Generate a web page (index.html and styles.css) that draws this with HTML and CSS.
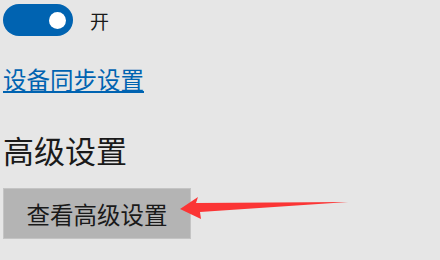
FILE: index.html
```html
<!DOCTYPE html>
<html lang="zh-CN">
<head>
    <meta charset="UTF-8">
    <title>同步设置</title>
    <link rel="stylesheet" href="styles.css">
</head>
<body>
    <div class="page">
        <div class="toggle-row">
            <div class="toggle"><div class="knob"></div></div>
            <span class="toggle-label">开</span>
        </div>

        <a class="link" href="#">设备同步设置</a>

        <h2 class="title">高级设置</h2>

        <button class="btn">查看高级设置</button>

        <svg class="arrow" width="440" height="260" viewBox="0 0 440 260">
            <polygon points="180,209 198,197 196,203 348,202 200,212 201,219" fill="#fb3535"/>
        </svg>
    </div>
</body>
</html>
```

FILE: styles.css
```css
body {
    margin: 0;
    padding: 0;
    background: #e6e6e6;
    font-family: "Microsoft YaHei", "Noto Sans CJK SC", sans-serif;
}
.page {
    position: relative;
    width: 440px;
    height: 260px;
    padding: 4px 0 0 3px;
    box-sizing: border-box;
    display: flex;
    flex-direction: column;
    align-items: flex-start;
}
.toggle-row {
    display: flex;
    align-items: center;
    height: 32px;
}
.toggle {
    width: 70px;
    height: 32px;
    border-radius: 16px;
    background: #0063b1;
    display: flex;
    align-items: center;
    justify-content: flex-end;
    padding-right: 7px;
    box-sizing: border-box;
}
.knob {
    width: 17px;
    height: 17px;
    border-radius: 50%;
    background: white;
}
.toggle-label {
    margin-left: 17px;
    font-size: 19px;
    color: #1a1a1a;
}
.link {
    margin-top: 27px;
    font-size: 23.5px;
    line-height: 32px;
    color: #0063b1;
    text-decoration: underline;
    text-underline-offset: 2px;
}
.title {
    margin: 33px 0 0;
    font-size: 31px;
    font-weight: normal;
    line-height: 44px;
    color: #1a1a1a;
}
.btn {
    margin-top: 16px;
    width: 188px;
    height: 51px;
    background: #b4b4b4;
    border: 1px solid #c4c4c4;
    font-family: inherit;
    font-size: 23.5px;
    color: #1a1a1a;
    padding: 0;
}
.arrow {
    position: absolute;
    left: 0;
    top: 0;
}
```
